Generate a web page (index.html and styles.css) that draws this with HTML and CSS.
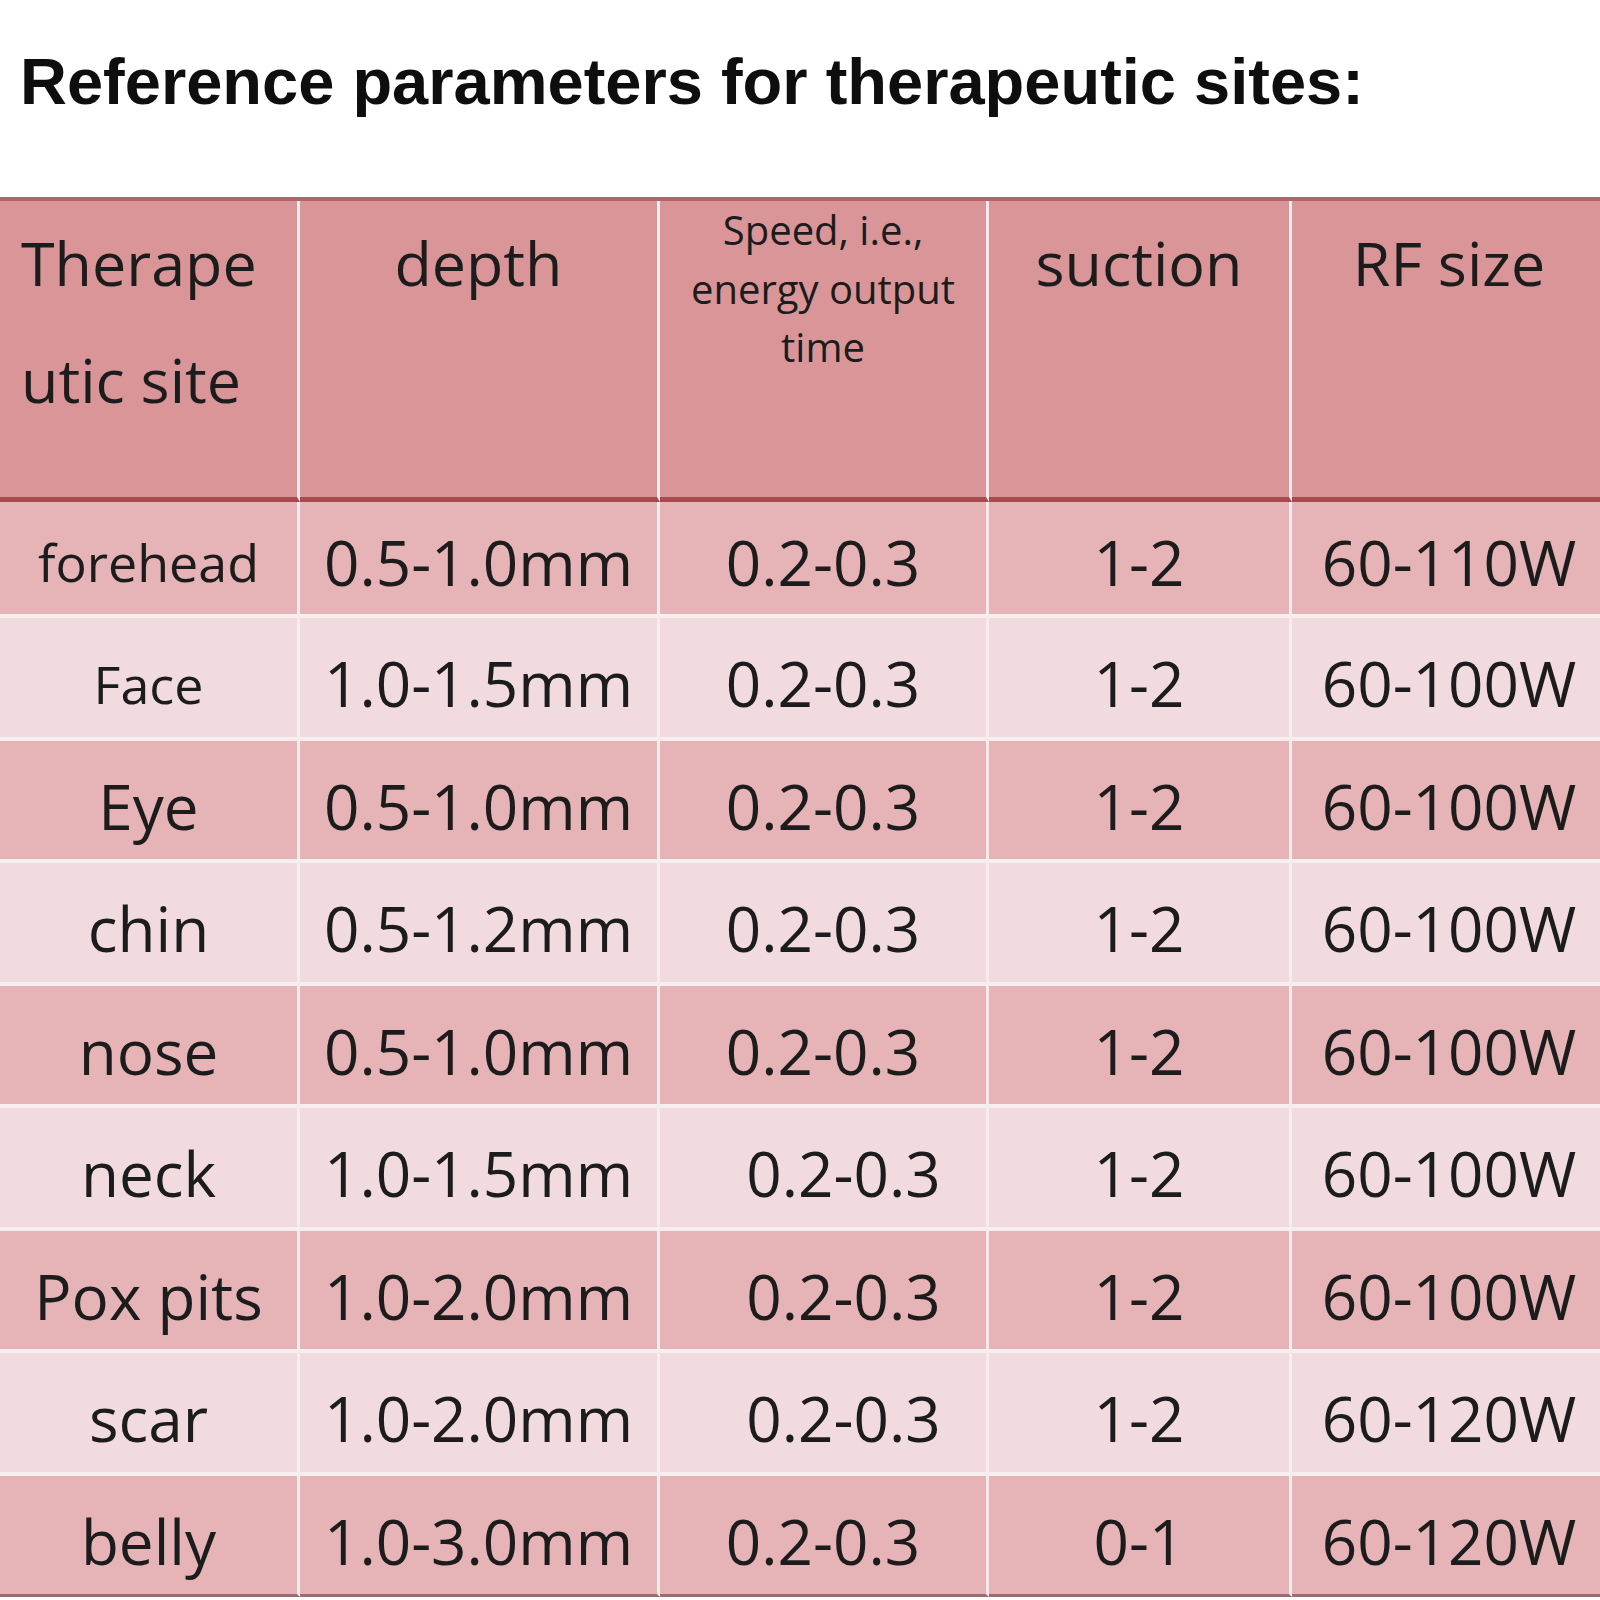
FILE: index.html
```html
<!DOCTYPE html>
<html lang="en">
<head>
<meta charset="utf-8">
<title>Reference parameters for therapeutic sites</title>
<link rel="stylesheet" href="styles.css">
</head>
<body>
<h1 class="title">Reference parameters for therapeutic sites:</h1>
<table class="params">
  <colgroup>
    <col class="c1"><col class="c2"><col class="c3"><col class="c4"><col class="c5">
  </colgroup>
  <thead>
    <tr>
      <th class="site-head">Therape<br>utic site</th>
      <th>depth</th>
      <th class="speed">Speed, i.e.,<br>energy output<br>time</th>
      <th>suction</th>
      <th>RF size</th>
    </tr>
  </thead>
  <tbody>
    <tr class="odd"><td class="small">forehead</td><td>0.5-1.0mm</td><td>0.2-0.3</td><td>1-2</td><td>60-110W</td></tr>
    <tr class="even"><td class="small">Face</td><td>1.0-1.5mm</td><td>0.2-0.3</td><td>1-2</td><td>60-100W</td></tr>
    <tr class="odd"><td>Eye</td><td>0.5-1.0mm</td><td>0.2-0.3</td><td>1-2</td><td>60-100W</td></tr>
    <tr class="even"><td>chin</td><td>0.5-1.2mm</td><td>0.2-0.3</td><td>1-2</td><td>60-100W</td></tr>
    <tr class="odd"><td>nose</td><td>0.5-1.0mm</td><td>0.2-0.3</td><td>1-2</td><td>60-100W</td></tr>
    <tr class="even"><td>neck</td><td>1.0-1.5mm</td><td class="shift">0.2-0.3</td><td>1-2</td><td>60-100W</td></tr>
    <tr class="odd"><td>Pox pits</td><td>1.0-2.0mm</td><td class="shift">0.2-0.3</td><td>1-2</td><td>60-100W</td></tr>
    <tr class="even"><td>scar</td><td>1.0-2.0mm</td><td class="shift">0.2-0.3</td><td>1-2</td><td>60-120W</td></tr>
    <tr class="odd last"><td>belly</td><td>1.0-3.0mm</td><td>0.2-0.3</td><td>0-1</td><td>60-120W</td></tr>
  </tbody>
</table>
</body>
</html>
```
FILE: styles.css
```css
html, body {
  margin: 0;
  padding: 0;
  background: #ffffff;
  overflow: hidden;
}

.title {
  margin: 0 0 80px 0;
  padding: 46px 0 0 20px;
  font-family: "Liberation Sans", Arial, sans-serif;
  font-weight: bold;
  font-size: 65px;
  line-height: 71px;
  color: #0e0e0e;
  white-space: nowrap;
}

.params {
  width: 1606px;
  table-layout: fixed;
  border-collapse: separate;
  border-spacing: 0;
  border-top: 4px solid #b5646a;
  font-family: "Open Sans", "Noto Sans", sans-serif;
  color: #1c1c1c;
}

.c1 { width: 300px; }
.c2 { width: 360px; }
.c3 { width: 329px; }
.c4 { width: 303px; }
.c5 { width: 314px; }

.params th,
.params td {
  padding: 0;
  border-right: 3px solid #f7eced;
  text-align: center;
  white-space: nowrap;
}

.params th:last-child,
.params td:last-child {
  border-right: none;
}

.params th {
  background: #d99598;
  font-weight: normal;
  font-size: 61px;
  line-height: 117px;
  vertical-align: top;
  padding-top: 3px;
  border-bottom: 5px solid #a7494f;
}

.params th.site-head {
  text-align: left;
  padding-left: 21px;
  padding-bottom: 59px;
}

.params th.speed {
  font-size: 40px;
  line-height: 58.5px;
  padding-top: 0;
}

.params td {
  font-size: 62px;
  line-height: 105.5px;
  padding-top: 13px;
  vertical-align: top;
  border-top: 4px solid #f7eeef;
}

.params tbody tr:first-child td {
  border-top: none;
  padding-top: 8px;
  line-height: 104px;
}

.params td.small {
  font-size: 52px;
}

.params td.shift {
  padding-left: 41px;
}

.odd td {
  background: #e6b3b6;
}

.even td {
  background: #f1dbde;
}

.last td {
  border-bottom: 3px solid #9a6e71;
}
```
